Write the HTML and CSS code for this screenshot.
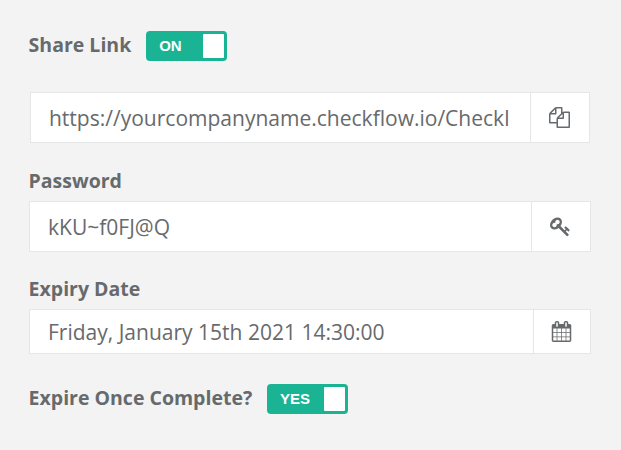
FILE: index.html
```html
<!DOCTYPE html>
<html lang="en">
<head>
    <meta charset="UTF-8">
    <meta name="viewport" content="width=device-width, initial-scale=1.0">
    <title>Share Link</title>

    <link rel="stylesheet" href="styles.css">
</head>
<body>
    <form class="share">
        <div class="toggle-row">
            <span class="label">Share Link</span>
            <span class="switch"><b>ON</b><i></i></span>
        </div>

        <div class="group link">
            <input type="text" value="https://yourcompanyname.checkflow.io/Checkl" readonly>
            <button type="button" aria-label="Copy">
                <svg viewBox="0 0 1792 1792"><path d="M1696 384q40 0 68 28t28 68v1216q0 40-28 68t-68 28h-960q-40 0-68-28t-28-68v-288h-544q-40 0-68-28t-28-68v-672q0-40 20-88t48-76l408-408q28-28 76-48t88-20h416q40 0 68 28t28 68v328q68-40 128-40h416zm-544 213l-299 299h299v-299zm-640-384l-299 299h299v-299zm196 647l316-316v-416h-384v416q0 40-28 68t-68 28h-416v640h512v-256q0-40 20-88t48-76zm956 804v-1152h-384v416q0 40-28 68t-68 28h-416v640h896z"/></svg>
            </button>
        </div>

        <label class="label" for="password">Password</label>
        <div class="group password">
            <input type="text" id="password" value="kKU~f0FJ@Q">
            <button type="button" aria-label="Generate password">
                <svg viewBox="0 0 1792 1792"><path d="M832 512q0-80-56-136t-136-56-136 56-56 136q0 42 19 83-41-19-83-19-80 0-136 56t-56 136 56 136 136 56 136-56 56-136q0-42-19-83 41 19 83 19 80 0 136-56t56-136zm851 704q0 17-49 66t-66 49q-9 0-28.5-16t-36.5-33-38.5-40-24.5-26l-96 96 220 220q28 28 28 68 0 42-39 81t-81 39q-40 0-68-28l-671-671q-176 131-365 131-163 0-265.5-102.5t-102.5-265.5q0-160 95-313t248-248 313-95q163 0 265.5 102.5t102.5 265.5q0 189-131 365l355 355 96-96q-3-3-26-24.5t-40-38.5-33-36.5-16-28.5q0-17 49-66t66-49q13 0 23 10 6 6 46 44.5t82 79.5 86.5 86 73 78 28.5 41z"/></svg>
            </button>
        </div>

        <label class="label" for="expiry">Expiry Date</label>
        <div class="group expiry">
            <input type="text" id="expiry" value="Friday, January 15th 2021 14:30:00">
            <button type="button" aria-label="Pick a date">
                <svg viewBox="0 0 1792 1792"><path d="M192 1664h288v-288h-288v288zm352 0h320v-288h-320v288zm-352-352h288v-320h-288v320zm352 0h320v-320h-320v320zm-352-384h288v-288h-288v288zm736 736h320v-288h-320v288zm-384-736h320v-288h-320v288zm768 736h288v-288h-288v288zm-384-352h320v-320h-320v320zm-352-864v-288q0-13-9.5-22.5t-22.5-9.5h-64q-13 0-22.5 9.5t-9.5 22.5v288q0 13 9.5 22.5t22.5 9.5h64q13 0 22.5-9.5t9.5-22.5zm736 864h288v-320h-288v320zm-384-384h320v-288h-320v288zm384 0h288v-288h-288v288zm32-480v-288q0-13-9.5-22.5t-22.5-9.5h-64q-13 0-22.5 9.5t-9.5 22.5v288q0 13 9.5 22.5t22.5 9.5h64q13 0 22.5-9.5t9.5-22.5zm384-64v1280q0 52-38 90t-90 38h-1408q-52 0-90-38t-38-90v-1280q0-52 38-90t90-38h128v-96q0-66 47-113t113-47h64q66 0 113 47t47 113v96h384v-96q0-66 47-113t113-47h64q66 0 113 47t47 113v96h128q52 0 90 38t38 90z"/></svg>
            </button>
        </div>

        <div class="toggle-row">
            <span class="label">Expire Once Complete?</span>
            <span class="switch"><b>YES</b><i></i></span>
        </div>
    </form>
</body>
</html>
```
FILE: styles.css
```css
* { box-sizing: border-box; }

body {
    margin: 0;
    color: #676a6c;
    background: #f3f3f3;
    font-family: "Open Sans", "Liberation Sans", sans-serif;
}

.share {
    display: flex;
    flex-direction: column;
    padding: 31px 30px 0 28.6px;
}

.label {
    font-size: 19.5px;
    font-weight: 700;
    line-height: 28px;
}

/* on/off switches */
.toggle-row {
    display: flex;
    gap: 14.4px;
    height: 30px;
}
.switch {
    display: flex;
    align-items: center;
    justify-content: space-between;
    width: 81px;
    height: 30px;
    padding: 3px 3px 3px 13.5px;
    border-radius: 4px;
    background: #1ab394;

    b {
        color: white;
        font: bold 15px/24px "Liberation Sans", Arial, sans-serif;
    }
    i {
        width: 21px;
        height: 24px;
        border-radius: 1px;
        background: white;
    }
}

/* input with a button on the right */
.group {
    display: flex;
    height: 51px;
    border: 1px solid #e5e6e7;
    background: white;

    input {
        flex: 1;
        min-width: 0;
        padding: 0 18px;
        border: 0;
        color: inherit;
        background: none;
        font: 21.02px "Open Sans", "Liberation Sans", sans-serif;
        outline: none;
    }
    button {
        display: flex;
        align-items: center;
        justify-content: center;
        width: 59px;
        padding: 0 1px 0 0;
        border: 0;
        border-left: 1px solid #e5e6e7;
        background: none;
    }
    svg {
        width: 21px;
        height: 21px;
        fill: #676a6c;
    }
}
.link {
    margin: 31px 1px 24px 1.4px;
}
.password {
    margin: 6px 0 23px 0.4px;
}
.expiry {
    height: 45px;
    margin: 6px 0 30px 0.4px;

    button { width: 57px; }
}
```
